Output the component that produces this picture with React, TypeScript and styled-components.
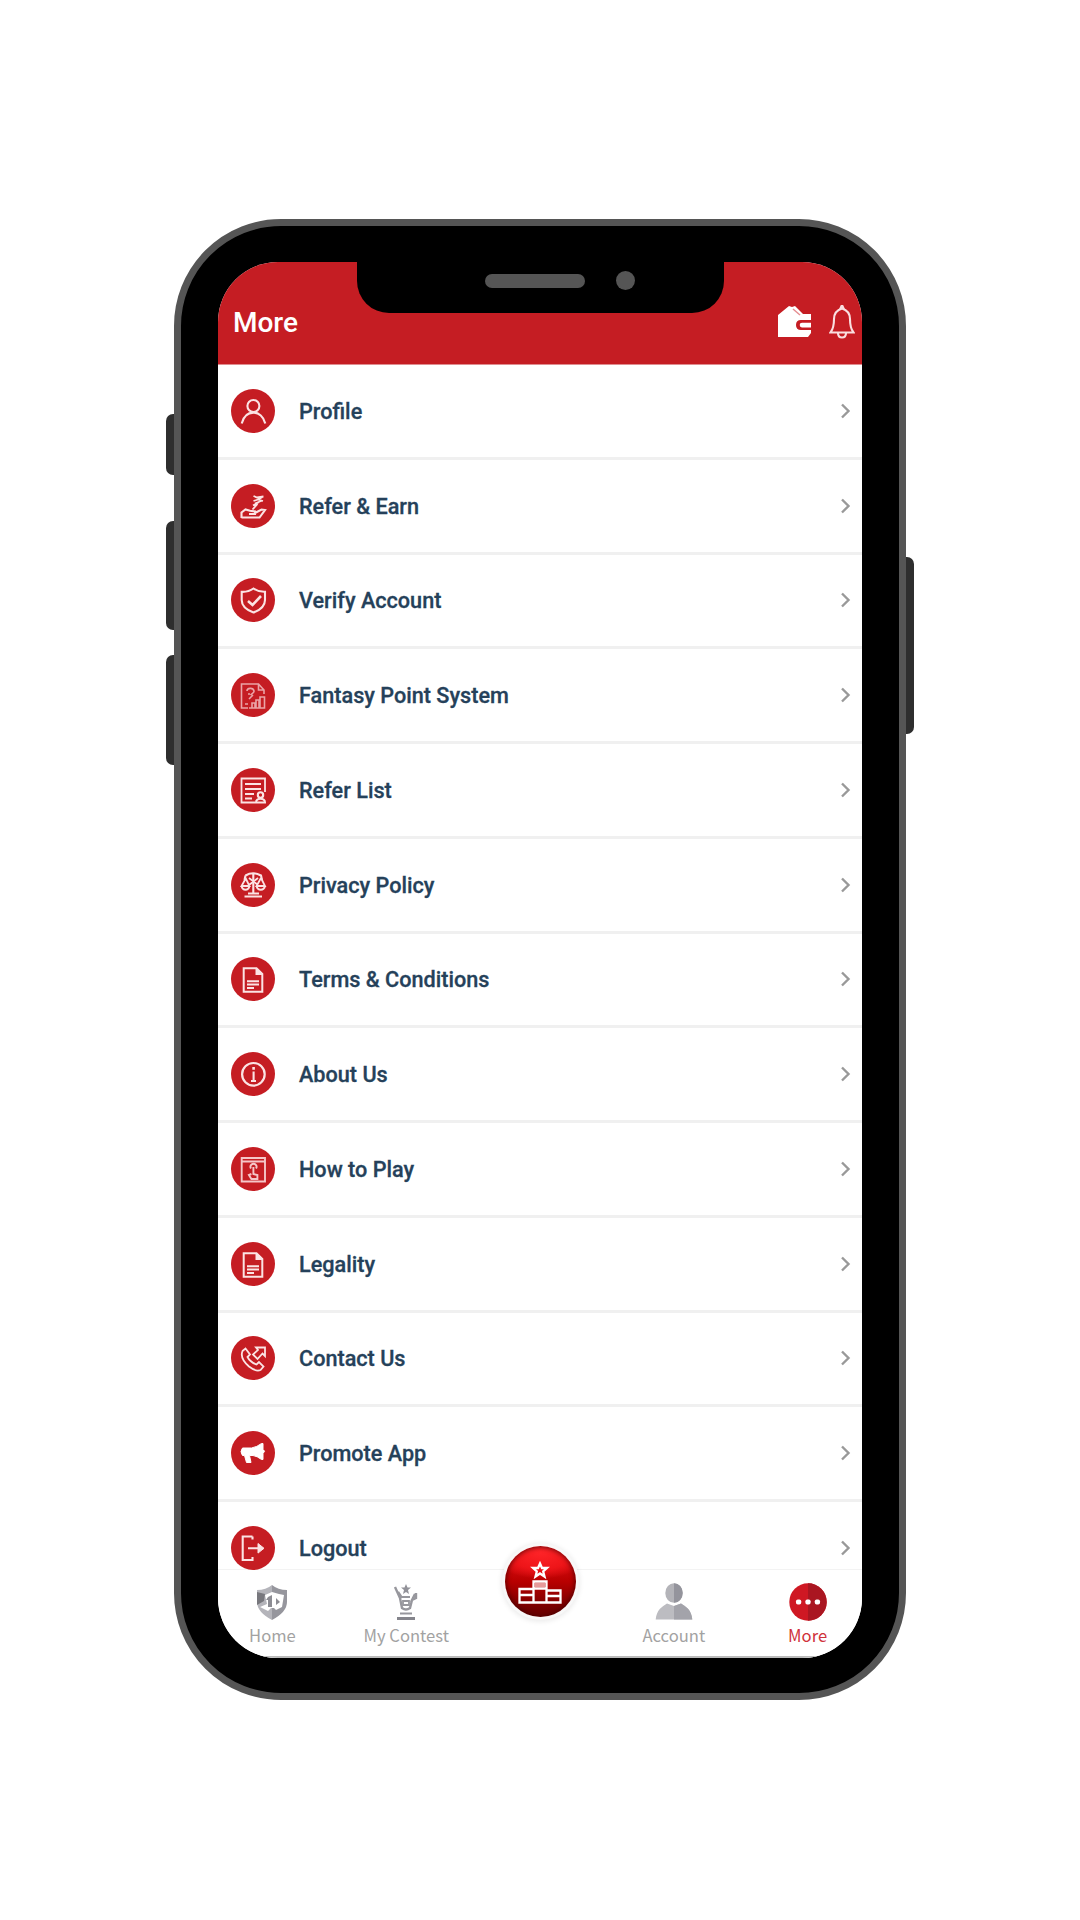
import React from "react";
import styled, { createGlobalStyle } from "styled-components";

const GlobalStyle = createGlobalStyle`
  * { box-sizing: border-box; }
  body { margin: 0; background: #fff; }
`;

const RED = "#c51d23";

const Page = styled.main`
  width: 1080px;
  height: 1920px;
  display: flex;
  justify-content: center;
  align-items: flex-start;
  padding-top: 219px;
  background: #fff;
  overflow: hidden;
  font-family: Roboto, "Liberation Sans", sans-serif;
`;

const Phone = styled.div`
  position: relative;
  display: flex;
  width: 732px;
  height: 1481px;
  padding: 36px 37px 35px 37px;
  border: 7px solid #555;
  border-radius: 107px;
  background: #000;
`;

const SideButton = styled.span<{ $side: "left" | "right"; $top: number; $height: number }>`
  position: absolute;
  ${(p) => p.$side}: -15px;
  top: ${(p) => p.$top}px;
  width: 8px;
  height: ${(p) => p.$height}px;
  background: #2e2e2e;
  border-radius: ${(p) => (p.$side === "left" ? "7px 0 0 7px" : "0 7px 7px 0")};
`;

const Screen = styled.div`
  flex: 1;
  display: flex;
  flex-direction: column;
  border-radius: 60px;
  background: #fff;
  overflow: hidden;
`;

const Notch = styled.div`
  position: absolute;
  z-index: 3;
  top: 35px;
  left: 176px;
  width: 367px;
  height: 52px;
  display: flex;
  align-items: flex-start;
  gap: 31px;
  padding: 10px 0 0 128px;
  background: #000;
  border-radius: 0 0 32px 32px;
`;

const Speaker = styled.span`
  width: 100px;
  height: 14px;
  margin-top: 3px;
  border-radius: 7px;
  background: #555;
`;

const Camera = styled.span`
  width: 19px;
  height: 19px;
  border-radius: 50%;
  background: #555;
`;

const Header = styled.header`
  flex: none;
  height: 103px;
  display: flex;
  align-items: flex-start;
  justify-content: space-between;
  padding: 43px 7px 0 15px;
  background: ${RED};
  border-bottom: 1px solid #e08d90;
`;

const Title = styled.h1`
  margin: 1px 0 0;
  color: #fff;
  font-size: 28px;
  font-weight: 500;
  line-height: 34px;
`;

const HeaderActions = styled.div`
  display: flex;
  gap: 18px;
`;

const Menu = styled.ul`
  flex: 1;
  min-height: 0;
  z-index: 1;
  margin: 0;
  padding: 0;
  list-style: none;
`;

const Row = styled.li`
  display: flex;
  align-items: center;
  height: 94.75px;
  padding: 0 10px 0 13px;
  border-bottom: 3px solid #f0f0f0;
  &:last-child { border-bottom: 0; height: 92.5px; }
`;

const RowIcon = styled.svg`
  flex: none;
  width: 44px;
  height: 44px;
  border-radius: 50%;
  background: ${RED};
  fill: none;
  stroke: #fbe3e4;
  stroke-width: 2.1;
`;

const Label = styled.span`
  flex: 1;
  margin: 2px 0 0 24px;
  color: #25415a;
  font-size: 21.65px;
  font-weight: 500;
  line-height: 28px;
  -webkit-text-stroke: 0.3px #25415a;
`;

const Chevron = styled.svg`
  width: 12px;
  height: 18px;
  fill: none;
  stroke: #999;
  stroke-width: 2.4;
`;

const TabBar = styled.nav`
  flex: none;
  height: 89px;
  display: grid;
  grid-template-columns: repeat(5, 133.8px);
  justify-content: center;
  background: #fff;
  border-top: 1px solid #f3f3f3;
  border-bottom: 2px solid #bbb;
`;

const Tab = styled.div<{ $active?: boolean }>`
  display: flex;
  flex-direction: column;
  align-items: center;
  padding-top: 12px;
  color: ${(p) => (p.$active ? "#d0323a" : "#a2a2a2")};
  font-family: "Noto Sans CJK SC", "Noto Sans", sans-serif;
  font-size: 16.6px;
  line-height: 24px;
  white-space: nowrap;
`;

const TabIcon = styled.svg`
  width: 40px;
  height: 40px;
  margin-bottom: 1px;
`;

const ContestButton = styled.div`
  position: relative;
  z-index: 2;
  justify-self: center;
  display: flex;
  align-items: center;
  justify-content: center;
  width: 71px;
  height: 71px;
  margin-top: -24px;
  border-radius: 50%;
  background: radial-gradient(ellipse 70% 38% at 50% 8%, #ff2428 0%, #ee1519 65%, rgba(220, 10, 14, 0) 100%),
    linear-gradient(#d80d12 20%, #b80000 50%, #710000 90%);
  box-shadow: inset 0 0 5px 1px rgba(60, 0, 0, 0.75), 0 0 0 3px #f8f8f8, 0 1px 5px 4px rgba(0, 0, 0, 0.08);
`;

const items: { label: string; icon: React.ReactNode }[] = [
  {
    label: "Profile",
    icon: (
      <>
        <circle cx="0.4" cy="-5" r="6" />
        <path d="M-11.3 12.5C-9.5 5.5-5 1.6.4 1.6S10.7 5.5 12.3 12.5" />
      </>
    ),
  },
  {
    label: "Refer & Earn",
    icon: (
      <>
        <path d="M-11.5 12V6.5L-7.5 3.5-3 4.8 2 5.5V8H-4M2 7 8.5 3.5 12 4 6.5 11.5H-11.5" />
        <path d="M.5-10 4-8.5 10.5-9.5M9.5-9 5-6.5 10-5M5-6.5.5-5M2-2.5 8-5M6-4 0-.5M4.5-2-.5 3.5" strokeWidth="1.8" />
      </>
    ),
  },
  {
    label: "Verify Account",
    icon: (
      <>
        <path d="M.5-11.5C-3-9-7-8-11.3-8.2V0c0 6 5 10 11.8 12.5C7.5 10 12 6 12 0v-8.2C7.5-8 4-9 .5-11.5Z" />
        <path d="m-5 1 4.5 4L8-4" strokeWidth="2.6" />
      </>
    ),
  },
  {
    label: "Fantasy Point System",
    icon: (
      <g stroke="#eaa4a7" strokeWidth="1.6">
        <path d="M-5 13h-6.5v-24H5.5L11-5v4M5.5-11v6H11M-8 9h3" />
        <path d="M-6-4c0-3 6-4 7 0 .4 2-2.5 2.5-3.5 4M-5-1h2M-4 4l4-4M-1 13V8h3v5M3 13V5h3v8M7 13V2h4.5v11H-4" />
      </g>
    ),
  },
  {
    label: "Refer List",
    icon: (
      <>
        <path d="M2 12.5h-13.5v-24H12V2M-8-6H8M-8-1H8M-8 4h9M-8 8.5h7" strokeWidth="1.8" />
        <circle cx="7.5" cy="5" r="2.7" />
        <path d="M3 12.5c0-5 9-5 9 0Z" />
      </>
    ),
  },
  {
    label: "Privacy Policy",
    icon: (
      <>
        <path d="M-7.5-9.5Q0-14 8-9.5L9-5M-7.5-9.5-8.5-5M-8.5 11.5h17.5M-5 8.5H6M.3-12V9" />
        <path
          d="m-7-7-4.5 8h8l-4-8M8-7 3.5 1H12L8-7M-11.5 1c1 5 7 5 8 0M3.5 1c1 5 7.5 5 8.5 0M-4-7 5 0M5-7-4 0"
          strokeWidth="1.8"
        />
      </>
    ),
  },
  { label: "Terms & Conditions", icon: <DocumentShape /> },
  {
    label: "About Us",
    icon: (
      <>
        <circle cx="0.4" cy="0.3" r="11.3" strokeWidth="2.2" />
        <path d="M.6-2.500v9.500M-2 7h5" />
        <path d="M.6-7v2.800" strokeWidth="2.600" />
      </>
    ),
  },
  {
    label: "How to Play",
    icon: (
      <g strokeWidth="1.9" stroke="#f5c6c8">
        <path d="M-11.300-11H12v23.500h-23.300ZM-11.300-7.500H12" />
        <path d="M-2-.5a3 3 0 1 1 5 0M.4-2v7l4 1v4h-6l-2.500-4 2.500-1" />
      </g>
    ),
  },
  { label: "Legality", icon: <DocumentShape /> },
  {
    label: "Contact Us",
    icon: (
      <g strokeWidth="1.8">
        <path d="M-10.500-7-7.500-9.500-3-3.500-5.500-1Q-3 4 3.500 6.500L6 4l4.500 4.500L7.500 12Q3 14-4 8.500-13.500 0-10.500-7Z" />
        <path d="M3-10.500h9V-2L9.500-4.500 4.500 1 0-3.500l5-4.500Z" />
      </g>
    ),
  },
  {
    label: "Promote App",
    icon: (
      <path
        fill="#fff"
        stroke="#fff"
        strokeWidth="1"
        strokeLinejoin="round"
        d="M-10.500-5h9Q4-6 8.500-9.500h1.500v6q3 1.500 0 4v6H8.500Q4 3 0 2.500h-3.500l1.500 7h-4.500L-8.500 2.500h-2q-3-4 0-7.500Z"
      />
    ),
  },
  {
    label: "Logout",
    icon: (
      <>
        <path d="M-.5-11.500h-9.800v23.500h9.800v-3M-.5-11.500v3M-5 .3H8" />
        <path d="m5-4.500 6 4.800-6 4.800Z" fill="#fbe3e4" strokeWidth="1" />
      </>
    ),
  },
];

function DocumentShape() {
  return (
    <>
      <path d="M-9.300-10.800H3.500L9.300-5v17.800h-18.600ZM3.500-10.800V-5h6M-6 2.300H6M-6 5.600H6M-6 9h7" strokeWidth="2" />
      <path d="M3.500-10.800 9.300-5H3.500Z" fill="#fbe3e4" stroke="none" />
    </>
  );
}

function WalletIcon() {
  return (
    <svg width="33" height="34" viewBox="0 0 33 34">
      <path fill="#fff" d="M0 10 11 1l3 1 3-1 8 8h8v6H23q-5 0-5 5t5 5h10v3l-3 4H0Z" />
      <path fill="#fff" d="M24 17.800h9v4.600h-9q-2.300 0-2.300-2.300t2.300-2.300Z" />
      <path d="m15 4 7 6" stroke="#e58e91" strokeWidth="1.500" />
    </svg>
  );
}

function BellIcon() {
  return (
    <svg width="26" height="34" viewBox="0 0 26 34" fill="none" stroke="#fadfe0" strokeWidth="2.100">
      <path d="M13 3.500Q5 6 5 14q0 9-3.500 13.500H24.500Q21 23 21 14q0-8-8-10.500Z" />
      <path d="M11 4.500 13 0l2 4.500M9 28q0 4.500 4 4.500t4-4.500" />
    </svg>
  );
}

function HomeIcon() {
  return (
    <TabIcon viewBox="-20 -20 40 40">
      <path d="M0-17Q6-12 15-12V0Q15 10 0 18Z" fill="#96969d" />
      <path d="M0-17Q-6-12-15-12V0Q-15 10 0 18Z" fill="#b4b4ba" />
      <path d="M-15-10-7-8-8-1-15 3Z" fill="#77777d" />
      <path d="M-7-7 0-10 7-8 12-7 10 5 4 8 2 6-1 6-4 9-12 5-5 2Z" fill="#fff" />
      <path d="m-4-5 4-2v12h-4V-2h-2ZM4-4l4 4-4 3Z" fill="#8c8c93" />
    </TabIcon>
  );
}

function TrophyIcon() {
  return (
    <TabIcon viewBox="-20 -20 40 40" fill="none" stroke="#97979d" strokeWidth="2.400">
      <path d="m0-18 1.500 3.500H5L2-12l1 4-3-2-3 2 1-4-3-2.500h3.500Z" fill="#929299" stroke="none" />
      <path d="M-11-15-6-4-4 6Q0 9 4 6L6-2 10-4V-9M-8-10l4 6M9-8 5 0" />
      <path d="M-4-5h8M-3-1h6v4h-6Z" strokeWidth="1.800" />
      <path d="M-6 11.500H6" strokeWidth="1.800" />
      <path d="M-9 16.500H9" stroke="#85858c" strokeWidth="2.800" />
    </TabIcon>
  );
}

function AccountIcon() {
  return (
    <TabIcon viewBox="-20 -20 40 40">
      <path d="M-18.300 17.500C-17.500 8-12 4.500-7 1.500L0 4 7 1.500C12 4.500 17.500 8 18.300 17.500Z" fill="#bcbcc1" />
      <path d="M0 4 7 1.500C12 4.500 17.500 8 18.300 17.500H0Z" fill="#a3a3aa" />
      <ellipse cy="-9" rx="8.700" ry="9.800" fill="#b3b3b8" />
      <path d="M0-18.800a8.700 9.800 0 0 1 0 19.600Z" fill="#94949c" />
    </TabIcon>
  );
}

function MoreIcon() {
  return (
    <TabIcon viewBox="-20 -20 40 40">
      <circle r="18.700" fill="#cf1823" />
      <path d="M0-18.700a18.700 18.700 0 0 1 0 37.400Z" fill="#aa1621" />
      <g fill="#fff">
        <rect x="-12" y="-2.600" width="5.200" height="5.200" rx="1.800" />
        <rect x="-2.600" y="-2.600" width="5.200" height="5.200" rx="1.800" />
        <rect x="6.800" y="-2.600" width="5.200" height="5.200" rx="1.800" />
      </g>
    </TabIcon>
  );
}

function PodiumIcon() {
  return (
    <svg width="44" height="48" viewBox="-22 -24 44 48" fill="none" stroke="#fff" strokeWidth="2.300">
      <path d="m0-18.500 2 4.500h5l-3.800 3.500L4.500-5.500 0-8.500-4.500-5.500-3.200-10.500-7-14h5Z" />
      <path d="M-6.500 20.500V-.5h13v21M-6.500 7H-20.500V20.500h41V8.500H6.500M-20.500 13h14M6.500 14h14M-6.500 6.500h13" />
      <path d="M-5 3H5" stroke="#e79a9a" strokeWidth="4" />
    </svg>
  );
}

export default function App() {
  return (
    <Page>
      <GlobalStyle />
      <Phone>
        <SideButton $side="left" $top={188} $height={61} />
        <SideButton $side="left" $top={295} $height={109} />
        <SideButton $side="left" $top={429} $height={110} />
        <SideButton $side="right" $top={331} $height={177} />
        <Notch>
          <Speaker />
          <Camera />
        </Notch>
        <Screen>
          <Header>
            <Title>More</Title>
            <HeaderActions>
              <WalletIcon />
              <BellIcon />
            </HeaderActions>
          </Header>
          <Menu>
            {items.map(({ label, icon }) => (
              <Row key={label}>
                <RowIcon viewBox="-22 -22 44 44">{icon}</RowIcon>
                <Label>{label}</Label>
                <Chevron viewBox="0 0 12 18">
                  <path d="m2 2.500 6.500 6.500L2 15.500" />
                </Chevron>
              </Row>
            ))}
          </Menu>
          <TabBar>
            <Tab>
              <HomeIcon />
              Home
            </Tab>
            <Tab>
              <TrophyIcon />
              My Contest
            </Tab>
            <ContestButton>
              <PodiumIcon />
            </ContestButton>
            <Tab>
              <AccountIcon />
              Account
            </Tab>
            <Tab $active>
              <MoreIcon />
              More
            </Tab>
          </TabBar>
        </Screen>
      </Phone>
    </Page>
  );
}
